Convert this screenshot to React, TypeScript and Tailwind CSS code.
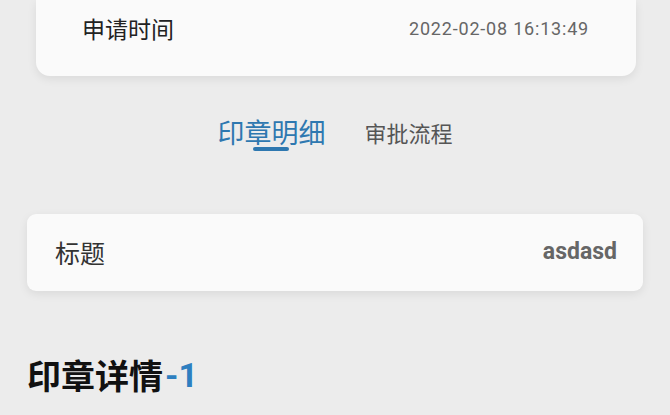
export default function App() {
  return (
    <div
      className="w-[670px] h-[415px] overflow-hidden bg-[#ececec]"
      style={{ fontFamily: '"Noto Sans CJK SC", Roboto, "Noto Sans", sans-serif' }}
    >
      {/* 申请信息卡片 */}
      <div className="mx-[36px] w-[600px] h-[76px] bg-[#fafafa] rounded-b-[14px] shadow-[0_3px_10px_rgba(0,0,0,0.08)] pl-[46px] pr-[47px] pt-[13px]">
        <div className="flex items-center justify-between h-[30px]">
          <span className="text-[23px] leading-[30px] text-[#222]">申请时间</span>
          <span className="text-[18px] tracking-[0.8px] text-[#666] font-['Roboto']">2022-02-08 16:13:49</span>
        </div>
      </div>

      {/* Tabs */}
      <div className="flex justify-center items-start gap-[39px] mt-[38px]">
        <div className="flex flex-col items-center">
          <span className="text-[27px] leading-[36px] text-[#2e78b0]">印章明细</span>
          <div className="w-[36px] h-[4px] rounded-full bg-[#2e78b0] -mt-[3px]" />
        </div>
        <span className="text-[22px] leading-[36px] text-[#555]">审批流程</span>
      </div>

      {/* 标题卡片 */}
      <div className="mx-[27px] mt-[63px] h-[77px] bg-[#fafafa] rounded-[9px] shadow-[0_3px_10px_rgba(0,0,0,0.08)] pl-[28px] pr-[26px] flex items-center justify-between">
        <span className="text-[25px] text-[#333]">标题</span>
        <span className="text-[23px] font-bold text-[#666] font-['Roboto']">asdasd</span>
      </div>

      {/* 印章详情 */}
      <div className="mt-[64px] px-[27px] flex items-center h-[40px]">
        <span className="text-[34px] leading-[40px] font-bold text-[#111]">印章详情</span>
        <span className="text-[34px] leading-[40px] font-bold text-[#2e7fc0] font-['Roboto'] ml-[2px]">-1</span>
      </div>
    </div>
  );
}
